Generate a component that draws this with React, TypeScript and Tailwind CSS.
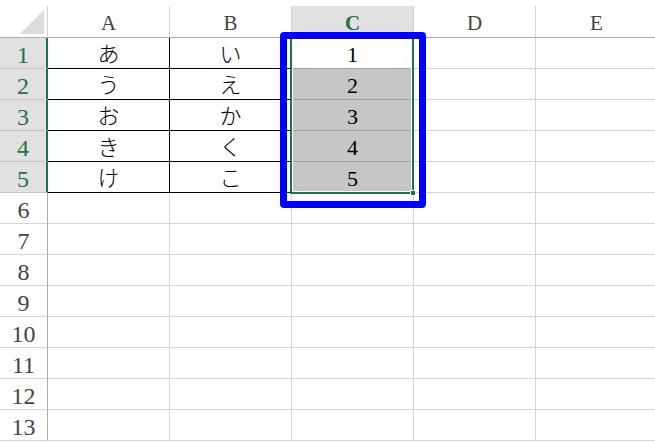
const cols = ["A", "B", "C", "D", "E"];

const data: Record<number, string[]> = {
  1: ["あ", "い", "1"],
  2: ["う", "え", "2"],
  3: ["お", "か", "3"],
  4: ["き", "く", "4"],
  5: ["け", "こ", "5"],
};

const rows = Array.from({ length: 13 }, (_, i) => i + 1);

const serif = { fontFamily: '"Liberation Serif", "Noto Sans CJK JP", serif' };

export default function App() {
  return (
    <div className="relative h-[443px] w-[655px] overflow-hidden bg-white" style={serif}>
      <div className="pt-[6px]">
        {/* column headers */}
        <div className="flex h-[32px]">
          <div className="relative flex h-[32px] w-[48px] shrink-0 items-end justify-end border-b border-r border-b-[#ababab] border-r-[#d4d4d4] pb-[3px] pr-[3px]">
            <svg width="24" height="24" viewBox="0 0 24 24">
              <polygon points="0,24 24,24 24,0" fill="#dcdcdc" />
            </svg>
          </div>
          {cols.map((c) => (
            <div
              key={c}
              className={`flex h-[32px] w-[122px] shrink-0 items-center justify-center border-b border-r border-b-[#ababab] border-r-[#d4d4d4] pt-[4px] text-[21px] ${
                c === "C" ? "bg-[#e1e1e1] font-bold text-[#217346]" : "text-[#444444]"
              }`}
            >
              {c}
            </div>
          ))}
        </div>

        {rows.map((r) => {
          const sel = r <= 5;
          const vals = data[r];
          return (
            <div key={r} className="flex h-[31px]">
              <div
                className={`flex h-[31px] w-[48px] shrink-0 items-center justify-center border-b pt-[4px] text-[24px] ${
                  sel
                    ? "border-r-2 border-b-[#c4c4c4] border-r-[#217346] bg-[#e1e1e1] text-[#217346]"
                    : "border-r border-b-[#d4d4d4] border-r-[#ababab] text-[#444444]"
                }`}
              >
                {r}
              </div>
              {cols.map((c, i) => {
                const v = vals ? vals[i] : undefined;
                let cls = "border-b border-r border-b-[#d4d4d4] border-r-[#d4d4d4]";
                if (sel && i < 2) cls = "border-b border-r border-black font-light";
                if (sel && i === 2) cls = `border-b border-r border-b-[#a0a0a0] border-r-[#d4d4d4] ${r === 1 ? "bg-white" : "bg-[#c6c6c6]"}`;
                return (
                  <div
                    key={c}
                    className={`flex h-[31px] w-[122px] shrink-0 items-center justify-center pt-[3px] text-[22px] text-black ${cls}`}
                  >
                    {v}
                  </div>
                );
              })}
            </div>
          );
        })}
      </div>

      {/* selection range */}
      <div className="absolute left-[290px] top-[37px] h-[157px] w-[124px] border-2 border-[#217346]">
        <div className="h-full w-full border border-white" />
        <div className="absolute -bottom-[4px] -right-[4px] h-[6px] w-[6px] border border-white bg-[#217346]" />
      </div>

      {/* blue highlight */}
      <div className="absolute left-[280px] top-[32px] h-[176px] w-[146px] rounded-[4px] border-[7px] border-[#0000ff]" />
    </div>
  );
}
